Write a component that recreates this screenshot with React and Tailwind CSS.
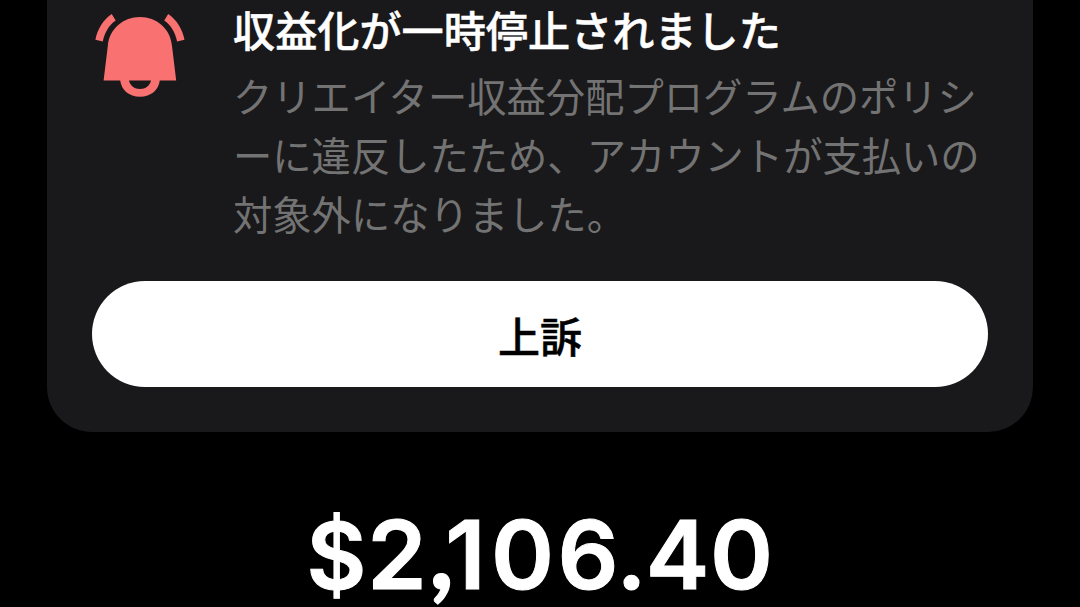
import React from 'react';

// digits are spaced one by one, the comma is a curly one
const amount = [
    { char: '$', className: 'w-[57px] text-[92px]' },
    { char: '2', className: 'w-[52px] ml-[6px]' },
    { char: ',', className: "w-[19px] ml-[9px] font-['Lato',sans-serif] font-black text-[102px]" },
    { char: '1', className: 'w-[33px] -ml-[2px]' },
    { char: '0', className: 'w-[57px] ml-[12px]' },
    { char: '6', className: 'w-[52px] ml-[11px]' },
    { char: '.', className: 'w-[17px] ml-[9px]' },
    { char: '4', className: 'w-[57px] ml-[9px]' },
    { char: '0', className: 'w-[57px] ml-[7px]' },
];

function BellIcon() {
    return (
        <svg viewBox="0 0 96 96" className="w-24 h-24 shrink-0 text-[#f97171]" fill="currentColor">
            <path d="M48 9C31.5 9 17.3 20.5 15.8 38L11.6 72.5H28.2C29.3 81.8 37 88.8 48 88.8C59 88.8 66.7 81.8 67.8 72.5H84.2L80 38C78.5 20.5 64.5 9 48 9ZM37 72.5H59C57.8 77.8 53.6 81 48 81C42.4 81 38.2 77.8 37 72.5Z" />
            <path d="M19.7 6L23.7 12.4C17 17 12.5 24.5 10.8 33.6L3.4 31.8C5.4 21 11.3 11.8 19.7 6Z" />
            <path d="M76.2 6L72.2 12.4C79 17 83.4 24.5 85.1 33.6L92.5 31.8C90.5 21 84.6 11.8 76.2 6Z" />
        </svg>
    );
}

export default function App() {
    return (
        <div
            lang="ja"
            className="h-[607px] overflow-hidden bg-black px-[47px] font-['Noto_Sans_CJK_JP',sans-serif]"
        >
            {/* Notice card */}
            <div className="h-[432px] w-[986px] rounded-b-[45px] bg-[#19191b] px-[45px]">
                <div className="flex h-[281px]">
                    <div className="w-[141px] shrink-0 pt-2">
                        <BellIcon />
                    </div>
                    <div className="whitespace-nowrap">
                        <h2 className="text-[42.15px] leading-[58px] font-medium text-white [-webkit-text-stroke:0.5px_white]">
                            収益化が一時停止されました
                        </h2>
                        <p className="mt-[7px] text-[39.3px] leading-[59px] text-[#737373]">
                            クリエイター収益分配プログラムのポリシ
                            <br />
                            ーに違反したため、アカウントが支払いの
                            <br />
                            対象外になりました。
                        </p>
                    </div>
                </div>
                <button className="flex h-[106px] w-full items-center justify-center rounded-full bg-white text-[42px] font-medium text-black [-webkit-text-stroke:0.5px_black]">
                    上訴
                </button>
            </div>

            {/* Balance */}
            <div className="mt-[72px] ml-[261px] flex items-baseline font-['Inter',sans-serif] text-[95.5px] leading-[92px] font-semibold text-white [-webkit-text-stroke:1px_white]">
                {amount.map((item, i) => (
                    <span key={i} className={`flex shrink-0 justify-center ${item.className}`}>
                        {item.char}
                    </span>
                ))}
            </div>
        </div>
    );
}
